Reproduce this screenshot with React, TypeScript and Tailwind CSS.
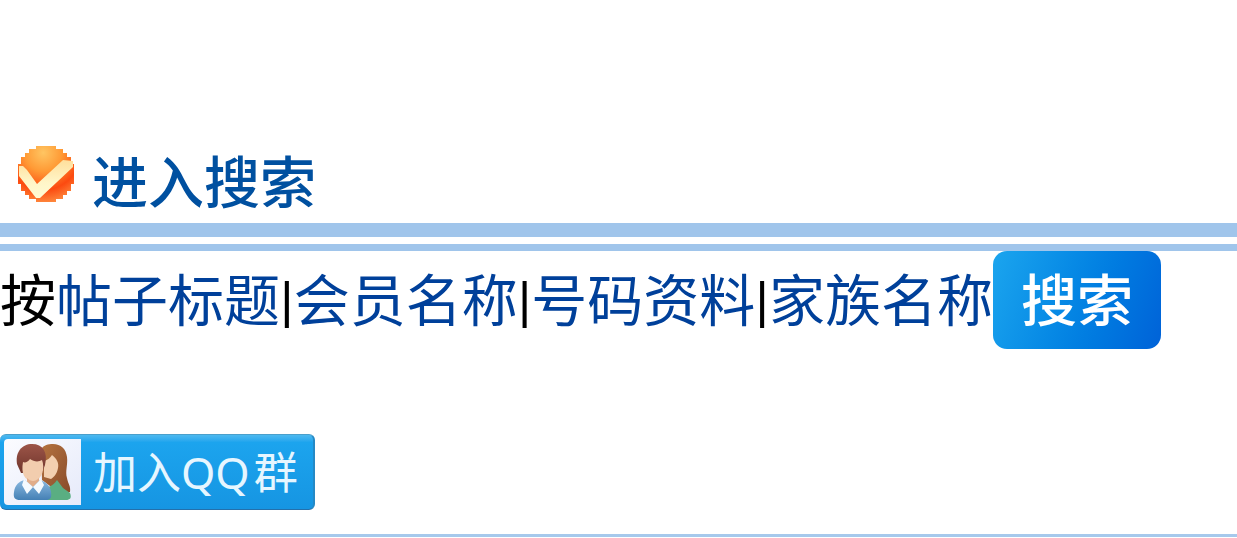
import { Fragment } from 'react'

const fields = ['帖子标题', '会员名称', '号码资料', '家族名称']

function CheckBadge() {
  return (
    <svg viewBox="0 0 56 56" className="w-14 h-14 shrink-0" aria-hidden="true">
      <defs>
        <radialGradient id="badge" cx="0.45" cy="0.12" r="0.95">
          <stop offset="0" stopColor="#ffc562" />
          <stop offset="0.35" stopColor="#ff9a35" />
          <stop offset="0.7" stopColor="#fc4a10" />
          <stop offset="1" stopColor="#ff9647" />
        </radialGradient>
        <linearGradient id="tick" x1="0" y1="0" x2="0" y2="1">
          <stop offset="0" stopColor="#ffdf9c" />
          <stop offset="0.6" stopColor="#fff6c8" />
          <stop offset="1" stopColor="#fffbd5" />
        </linearGradient>
      </defs>
      <path
        d="M18 0h20v3h7v4h4v4h4v7h3v20h-3v7h-4v4h-4v4h-7v3H18v-3h-7v-4H7v-4H3v-7H0V18h3v-7h4V7h4V3h7z"
        fill="url(#badge)"
      />
      <path d="M1 20h4l4 4 10 14 26-24 10 1v6L22 52h-4L1 30z" fill="url(#tick)" />
    </svg>
  )
}

function Friends() {
  return (
    <svg viewBox="0 0 60 60" className="w-15 h-15" aria-hidden="true">
      <defs>
        <linearGradient id="hair" x1="0" y1="0" x2="0" y2="1">
          <stop offset="0" stopColor="#9c5548" />
          <stop offset="1" stopColor="#70352c" />
        </linearGradient>
        <linearGradient id="longHair" x1="0" y1="0" x2="1" y2="1">
          <stop offset="0" stopColor="#b57440" />
          <stop offset="1" stopColor="#874a2a" />
        </linearGradient>
        <linearGradient id="shirt" x1="0" y1="0" x2="0" y2="1">
          <stop offset="0" stopColor="#8ab9e0" />
          <stop offset="1" stopColor="#4480b5" />
        </linearGradient>
      </defs>
      <path d="M28 5c3-4 7-5 12-5 8 0 13 5 14 13 1 8-2 14 0 21 1 6 4 8 3 14l-8 3-20-15z" fill="url(#longHair)" />
      <path d="M31 17c4-1 6-3 8-6 5 4 7 8 6 13-1 6-4 9-7 11l-7-2z" fill="#f3d0b0" />
      <path d="M35 43c4-1 7-4 9-7l6 8 7 5c2 5 0 7-4 7H34z" fill="#5aae82" />
      <path d="M4 20C2 8 9 0 19 0c11 0 16 8 13 21l-3 8H8z" fill="url(#hair)" />
      <path d="M10 18c2 1 5 0 7-3 4 3 9 3 12 1 3 8 1 19-9 22-9-2-12-9-10-20z" fill="#f2cdae" />
      <path d="M14 34c4 4 8 4 12 0v9H14z" fill="#e0ad8a" />
      <path d="M1 48c1-7 5-11 11-12l8 7 7-7c6 2 10 5 11 12 1 6-1 8-5 8H7c-5 0-7-2-6-8z" fill="url(#shirt)" />
      <path d="M11 35l9 8-6 7-5-9zM28 35l-8 8 6 7 5-9z" fill="#f4faff" />
    </svg>
  )
}

export default function App() {
  return (
    <main className="w-full bg-white pt-36 font-[Roboto,'Noto_Sans_CJK_SC',sans-serif] text-[56px] leading-[77px]">
      <h1 className="flex items-start gap-[18px] pl-[18px] pt-[2px] text-[#0050a0] font-medium">
        <CheckBadge />
        <a href="#search">进入搜索</a>
      </h1>
      <div className="h-7 border-t-[14px] border-b-[7px] border-[#a0c5eb]" />

      <form
        id="search"
        className="flex flex-wrap items-center text-black"
        onSubmit={(e) => e.preventDefault()}
      >
        <p className="pt-1">
          按
          {fields.map((field, i) => (
            <Fragment key={field}>
              {i > 0 && '|'}
              <a href="#search" className="text-[#00409a]">
                {field}
              </a>
            </Fragment>
          ))}
        </p>
        <button
          type="submit"
          className="h-[98px] px-7 pt-1 rounded-[14px] bg-linear-110 from-[#1ba5ee] to-[#0062d8] text-white font-medium"
        >
          搜索
        </button>
      </form>

      <div className="flex pt-[85px] pb-6">
        <a
          href="#group"
          className="flex items-stretch w-[315px] h-[76px] p-1 pr-0 rounded-md border-y border-r-2 border-t-[#4b9fcb] border-r-[#2589c5] border-b-[#2470ab] bg-linear-to-b from-[#4db9ef] from-0% via-[#1ca4ee] via-10% to-[#1695e2] text-[#e6f6ff] font-['Noto_Sans','Noto_Sans_CJK_SC',sans-serif] text-[44px] leading-[66px]"
        >
          <span className="flex items-center justify-center w-[77px] pt-1 shrink-0 rounded-l-sm bg-linear-to-br from-[#fbfcff] to-[#e6eafa]">
            <Friends />
          </span>
          <span className="flex gap-1 pl-3 whitespace-nowrap">
            <span>加入QQ</span>
            <span>群</span>
          </span>
        </a>
      </div>
      <hr className="border-t-[3px] border-[#a6c9ec]" />
    </main>
  )
}
